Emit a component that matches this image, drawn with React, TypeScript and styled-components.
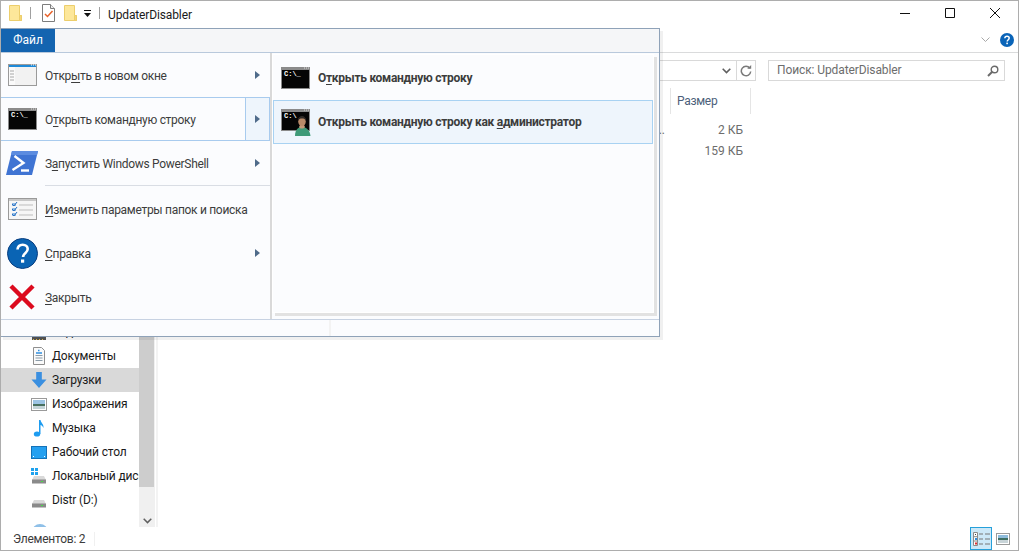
import React from "react";
import styled, { createGlobalStyle } from "styled-components";

const Global = createGlobalStyle`
  html, body { margin: 0; padding: 0; background: #fff; }
  body { font-family: "Roboto", "Noto Sans", "Liberation Sans", sans-serif; font-size: 12px; color: #1a1a1a; overflow: hidden; }
  * { box-sizing: border-box; }
`;

const Win = styled.div`
  position: relative;
  width: 1019px;
  height: 551px;
  border: 1px solid #adadad;
  background: #fff;
  display: flex;
  flex-direction: column;
  overflow: hidden;
`;
const TitleBar = styled.div`
  height: 28px;
  flex: none;
  display: flex;
  align-items: center;
  padding: 0 1px 4px 8px;
`;
const QuickIcon = styled.span<{ $ml?: number }>`
  display: flex;
  margin-left: ${(p) => p.$ml ?? 0}px;
`;
const QuickSep = styled.span<{ $ml: number }>`
  width: 1px;
  height: 12px;
  background: #a0a0a0;
  margin-left: ${(p) => p.$ml}px;
`;
const Title = styled.span`
  margin: 3px 0 0 8px;
  color: #1a1a1a;
  letter-spacing: -0.13px;
  flex: 1;
`;
const WinBtn = styled.span`
  width: 45px;
  height: 20px;
  display: flex;
  align-items: center;
  justify-content: center;
`;
const RibbonRow = styled.div`
  height: 24px;
  flex: none;
  border-bottom: 1px solid #dadbdc;
  display: flex;
  align-items: center;
  justify-content: flex-end;
  gap: 10px;
  padding-right: 4px;
  padding-bottom: 2px;
`;
const AddressRow = styled.div`
  height: 34px;
  flex: none;
  display: flex;
  align-items: flex-start;
  padding: 7px 13px 0 159px;
`;
const AddressBox = styled.div`
  width: 596px;
  height: 21px;
  border: 1px solid #d9d9d9;
  display: flex;
  align-items: center;
  justify-content: flex-end;
`;
const Refresh = styled.span`
  width: 19px;
  height: 19px;
  margin-left: 5px;
  border-left: 1px solid #d9d9d9;
  display: flex;
  align-items: center;
  justify-content: center;
`;
const SearchBox = styled.div`
  width: 237px;
  height: 21px;
  margin-left: 12px;
  border: 1px solid #d9d9d9;
  display: flex;
  align-items: center;
  justify-content: space-between;
  padding: 0 5px 2px 8px;
  color: #6d6d6d;
  letter-spacing: -0.1px;
  svg { margin-top: 2px; }
`;
const Main = styled.div`
  flex: 1;
  min-height: 0;
  display: flex;
`;
const Nav = styled.div`
  width: 138px;
  flex: none;
  display: flex;
  flex-direction: column;
  justify-content: flex-end;
  overflow: hidden;
`;
const NavRow = styled.div<{ $active?: boolean }>`
  height: 24px;
  flex: none;
  display: flex;
  align-items: center;
  gap: 5px;
  padding-left: 30px;
  white-space: nowrap;
  letter-spacing: -0.15px;
  background: ${(p) => (p.$active ? "#d9d9d9" : "transparent")};
  svg { flex: none; }
`;
const NavPeek = styled.div`
  height: 15px;
  flex: none;
  padding: 12px 0 0 31px;
  overflow: hidden;
`;
const Scroll = styled.div`
  width: 16px;
  flex: none;
  display: flex;
  flex-direction: column;
  background: #f0f0f0;
`;
const Thumb = styled.div`
  flex: 1;
  width: 15px;
  background: #cdcdcd;
`;
const ScrollEnd = styled.div`
  height: 40px;
  flex: none;
  display: flex;
  align-items: flex-end;
  justify-content: center;
  padding-bottom: 3px;
`;
const List = styled.div`
  flex: 1;
  margin-left: 1px;
  border-left: 2px solid #f3f3f3;
`;
const HeaderRow = styled.div`
  height: 26px;
  margin-top: 1px;
  display: flex;
  padding-left: 512px;
`;
const HeaderCell = styled.div`
  width: 81px;
  border-left: 1px solid #e5e5e5;
  border-right: 1px solid #e5e5e5;
  padding-left: 6px;
  line-height: 26px;
  color: #4c607a;
  letter-spacing: -0.3px;
`;
const FileRows = styled.div`
  padding-top: 5px;
`;
const FileRow = styled.div`
  height: 21px;
  display: flex;
  align-items: center;
  padding-left: 430px;
  color: #6d6d6d;
`;
const TypeCell = styled.div`
  width: 77px;
  overflow: hidden;
  white-space: nowrap;
  text-align: right;
`;
const SizeCell = styled.div`
  width: 78px;
  text-align: right;
`;
const Status = styled.div`
  height: 23px;
  flex: none;
  display: flex;
  align-items: center;
  padding-left: 12px;
  color: #3c3c3c;
  letter-spacing: -0.25px;
`;
const StatusText = styled.span`
  width: 82px;
  height: 14px;
  line-height: 14px;
  border-right: 1px solid #f0f0f0;
  flex: none;
`;
const ViewBtns = styled.div`
  margin-left: auto;
  display: flex;
  align-items: center;
  gap: 4px;
  padding-right: 8px;
  height: 100%;
`;
const ViewActive = styled.span`
  width: 22px;
  height: 23px;
  background: #cce8f8;
  border: 1px solid #26a0da;
  display: flex;
  align-items: center;
  justify-content: center;
`;

/* file menu overlay */
const Menu = styled.div`
  position: absolute;
  left: -1px;
  top: 27px;
  width: 660px;
  height: 309px;
  border: 1px solid #8fa2b8;
  background: #fbfcfe;
  box-shadow: 3px 3px 0 rgba(0, 0, 0, 0.06);
  display: flex;
  flex-direction: column;
`;
const MenuHead = styled.div`
  height: 24px;
  flex: none;
  background: #f5f6f8;
  border-bottom: 1px solid #b9c9dc;
  display: flex;
`;
const FileTab = styled.div`
  width: 54px;
  height: 23px;
  background: #1464b0;
  color: #fff;
  text-align: center;
  line-height: 23px;
`;
const MenuBody = styled.div`
  height: 267px;
  flex: none;
  display: flex;
  border-bottom: 1px solid #c7d2e2;
`;
const MenuCol = styled.div`
  width: 269px;
  flex: none;
  display: flex;
  flex-direction: column;
`;
const Splitter = styled.div`
  width: 2px;
  flex: none;
  background: #d9d9d9;
`;
const MenuRow = styled.div<{ $open?: boolean }>`
  height: 44px;
  flex: none;
  display: flex;
  align-items: center;
  color: #3c3c3c;
  letter-spacing: -0.3px;
  border-top: 1px solid ${(p) => (p.$open ? "#a8cbee" : "transparent")};
  border-bottom: 1px solid ${(p) => (p.$open ? "#a8cbee" : "transparent")};
  border-right: 1px solid ${(p) => (p.$open ? "#a8cbee" : "transparent")};
`;
const RowIcon = styled.span`
  width: 44px;
  flex: none;
  padding-left: 7px;
  display: flex;
  align-items: center;
`;
const RowLabel = styled.span`
  flex: 1;
  margin-top: 2px;
  white-space: nowrap;
`;
const ArrowCell = styled.span<{ $open?: boolean }>`
  width: 24px;
  align-self: stretch;
  flex: none;
  display: flex;
  align-items: center;
  justify-content: center;
  border-left: 1px solid ${(p) => (p.$open ? "#a8cbee" : "transparent")};
  background: ${(p) => (p.$open ? "#eef5fc" : "transparent")};
`;
const MenuSep = styled.div`
  height: 2px;
  flex: none;
  margin-left: 44px;
  border-top: 1px solid #d9dde4;
`;
const SubPanel = styled.div`
  width: 382px;
  height: 259px;
  margin-top: 1px;
  padding-top: 1px;
  background: #fbfcfe;
  border: 1px solid #fff;
  box-shadow: 3px 3px 0 #e2e2e2;
`;
const SubItem = styled.div<{ $hot?: boolean }>`
  height: 44px;
  display: flex;
  align-items: center;
  padding-left: 7px;
  gap: 8px;
  font-weight: 700;
  color: #3c3c3c;
  letter-spacing: -0.28px;
  background: ${(p) => (p.$hot ? "#eef5fc" : "transparent")};
  border: 1px solid ${(p) => (p.$hot ? "#a8d2f2" : "transparent")};
`;
const SubAdminLabel = styled.span`
  margin-left: -1px;
`;
const MenuFoot = styled.div`
  flex: 1;
  padding-left: 328px;
`;
const FootLine = styled.div`
  width: 2px;
  height: 100%;
  background: #f3f3f3;
`;
const Key = styled.u`
  text-underline-offset: 2px;
  text-decoration-thickness: 1px;
`;
const IconPull = styled.span<{ $ml: number }>`
  display: flex;
  margin-left: ${(p) => p.$ml}px;
`;

/* icons */
const Folder = () => (
  <svg width="13" height="16" viewBox="0 0 13 16">
    <path d="M.5.5h10v10h2v5H.5z" fill="#fde79a" stroke="#ecce6c" />
    <path d="M10.500 10.500v5h2v-5z" fill="#f4d67a" stroke="#ecce6c" />
  </svg>
);
const Props = () => (
  <svg width="13" height="18" viewBox="0 0 13 18">
    <path d="M.5.5h8l4 4v13H.5z" fill="#fff" stroke="#7d7d7d" />
    <path d="M8.500.5v4h4" fill="#eee" stroke="#7d7d7d" />
    <path d="M3 10l2.500 2.500L10.500 7" fill="none" stroke="#e8622a" strokeWidth="1.500" />
  </svg>
);
const QatArrow = () => (
  <svg width="7" height="7" viewBox="0 0 7 7">
    <path d="M0 0h7v1H0zM0 3h7L3.500 7z" fill="#111" />
  </svg>
);
const Min = () => (
  <svg width="10" height="10" viewBox="0 0 10 10"><path d="M0 5.500h10" stroke="#111" /></svg>
);
const Max = () => (
  <svg width="10" height="10" viewBox="0 0 10 10"><path d="M.5.5h9v9h-9z" fill="none" stroke="#111" /></svg>
);
const Close = () => (
  <svg width="10" height="10" viewBox="0 0 10 10"><path d="M0 0l10 10M10 0L0 10" stroke="#111" /></svg>
);
const ChevronThin = () => (
  <svg width="9" height="6" viewBox="0 0 9 6"><path d="M.5.5l4 4 4-4" fill="none" stroke="#a8a8a8" /></svg>
);
const HelpSmall = () => (
  <svg width="14" height="14" viewBox="0 0 14 14">
    <circle cx="7" cy="7" r="7" fill="#0a64b8" />
    <path d="M4.800 5.200C4.900 3.900 5.800 3.200 7 3.200c1.300 0 2.200.8 2.200 1.900 0 1.700-2 1.700-2 3.500" fill="none" stroke="#fff" strokeWidth="1.500" />
    <rect x="6.300" y="9.600" width="1.600" height="1.600" fill="#fff" />
  </svg>
);
const DropChevron = () => (
  <svg width="9" height="6" viewBox="0 0 9 6"><path d="M.7.8l3.800 3.800L8.300.8" fill="none" stroke="#5f5f5f" strokeWidth="1.600" /></svg>
);
const RefreshIcon = () => (
  <svg width="12" height="12" viewBox="0 0 12 12">
    <path d="M9.800 3.200A4.700 4.700 0 1 0 10.700 6.500" fill="none" stroke="#7a7a7a" strokeWidth="1.500" />
    <path d="M7.200 3.800h4V0z" fill="#7a7a7a" />
  </svg>
);
const Magnifier = () => (
  <svg width="12" height="12" viewBox="0 0 12 12">
    <circle cx="7.500" cy="4.500" r="3.300" fill="none" stroke="#6a6a6a" strokeWidth="1.400" />
    <path d="M5 7L1 11" stroke="#6a6a6a" strokeWidth="2" />
  </svg>
);
const Arrow = () => (
  <svg width="5" height="8" viewBox="0 0 5 8"><path d="M0 0l5 4-5 4z" fill="#4f6b8a" /></svg>
);
const NewWindow = () => (
  <svg width="29" height="22" viewBox="0 0 29 22">
    <rect x=".5" y=".5" width="28" height="21" fill="#f2f2f2" stroke="#9a9a9a" />
    <rect x="1" y="1" width="27" height="2" fill="#1f8ad8" />
    <rect x="1" y="3" width="6" height="18" fill="#fafafa" />
    <path d="M2 7h4M2 10h4M2 13h4M2 16h4" stroke="#a8a8a8" />
    <path d="M23 1h1M25 1h1M27 1h1" stroke="#fff" />
  </svg>
);
const Prompt = styled.text`
  font-family: "Liberation Mono", monospace;
  font-size: 7px;
  letter-spacing: 0;
  font-weight: 700;
  fill: #fff;
`;
const Cmd = () => (
  <svg width="29" height="22" viewBox="0 0 29 22">
    <rect x=".5" y=".5" width="28" height="21" fill="#050505" stroke="#8a8a8a" />
    <rect x="1" y="1" width="27" height="2" fill="#8c8c8c" />
    <path d="M23 1h1M25 1h1M27 1h1" stroke="#ddd" />
    <Prompt x="3" y="9">C:\_</Prompt>
  </svg>
);
const CmdAdmin = () => (
  <svg width="30" height="27" viewBox="0 0 30 27">
    <rect x=".5" y=".5" width="28" height="21" fill="#050505" stroke="#8a8a8a" />
    <rect x="1" y="1" width="27" height="2" fill="#8c8c8c" />
    <path d="M23 1h1M25 1h1M27 1h1" stroke="#ddd" />
    <Prompt x="3" y="9">C:\</Prompt>
    <path d="M14 27c0-6 3-9 7-9s8 3 8.500 9z" fill="#3f9a78" />
    <path d="M18 18c.5 2 5 2 6 0l-1-2h-4z" fill="#c49a78" />
    <ellipse cx="21" cy="12.500" rx="3.800" ry="4.500" fill="#b98a68" />
    <path d="M17 12c0-3.500 2-5 4-5s4 1.500 4 5c-1-2-2-2.500-4-2.500s-3 .5-4 2.500z" fill="#2f2a26" />
  </svg>
);
const PowerShell = () => (
  <svg width="32" height="24" viewBox="0 0 32 24">
    <path d="M6 0h26l-6 24H0z" fill="#3f74d3" />
    <path d="M6 0h26l-1 4H5z" fill="#5c8ce0" />
    <path d="M8.500 5l9 7-11 7" fill="none" stroke="#fff" strokeWidth="2.400" />
    <path d="M15 19.500h8" stroke="#fff" strokeWidth="2.400" />
  </svg>
);
const Settings = () => (
  <svg width="29" height="22" viewBox="0 0 29 22">
    <rect x=".5" y=".5" width="28" height="21" fill="#f6f6f6" stroke="#9a9a9a" />
    <rect x="1" y="1" width="27" height="2" fill="#c8c8c8" />
    <rect x="4" y="5" width="4" height="3" fill="#8fbbe6" />
    <rect x="4" y="10" width="4" height="3" fill="#8fbbe6" />
    <rect x="4" y="15" width="4" height="3" fill="#8fbbe6" />
    <path d="M4 6l2 2 3-4M4 11l2 2 3-4M4 16l2 2 3-4" fill="none" stroke="#2a6fc0" />
    <path d="M11 7h14M11 12h14M11 17h14" stroke="#bdbdbd" />
  </svg>
);
const Help = () => (
  <svg width="31" height="31" viewBox="0 0 31 31">
    <circle cx="15.500" cy="15.500" r="15" fill="#0a64b4" stroke="#0a3f80" />
    <path d="M10.500 11.500c.2-3 2.400-4.800 5.200-4.800 3 0 5 1.900 5 4.400 0 4-4.600 3.700-4.600 8" fill="none" stroke="#fff" strokeWidth="2.600" />
    <rect x="14" y="21.500" width="3.200" height="3.200" fill="#fff" />
  </svg>
);
const RedX = () => (
  <svg width="26" height="26" viewBox="0 0 26 26">
    <path d="M2 2l22 22M24 2L2 24" stroke="#dc0a1e" strokeWidth="4.500" />
  </svg>
);
const FilmIcon = () => (
  <svg width="16" height="16" viewBox="0 0 16 16">
    <rect x="1" y="4" width="14" height="12" fill="#555" />
    <path d="M2 15.500h1M5 15.500h1M8 15.500h1M11 15.500h1" stroke="#e8c04a" />
  </svg>
);
const DocIcon = () => (
  <svg width="16" height="18" viewBox="0 0 16 18">
    <path d="M2.500.5h8l3 3v14h-11z" fill="#fafafa" stroke="#8f8f8f" />
    <path d="M7 3.500h1.500M5 6h6" stroke="#2f8fe0" strokeWidth="1.400" />
    <path d="M4.500 8.500h7M4.500 11h7M4.500 13.500h7" stroke="#8a9ba8" />
  </svg>
);
const DownIcon = () => (
  <svg width="16" height="16" viewBox="0 0 17 17">
    <path d="M5.500 0h6v8h5L8.500 17 .5 8h5z" fill="#3a8fe0" />
  </svg>
);
const ImgIcon = () => (
  <svg width="16" height="13" viewBox="0 0 16 13">
    <rect x=".5" y=".5" width="15" height="12" fill="#fff" stroke="#9a9a9a" />
    <rect x="2" y="2" width="12" height="4" fill="#9cc4e4" />
    <rect x="2" y="6" width="12" height="2" fill="#48705f" />
    <rect x="2" y="8" width="12" height="3" fill="#c4d4d8" />
  </svg>
);
const NoteIcon = () => (
  <svg width="16" height="17" viewBox="0 0 16 17">
    <ellipse cx="6" cy="14" rx="3.200" ry="2.600" fill="#1e9cf0" />
    <path d="M8 14V0h1.500c.5 3 3.500 4 3 8-.8-2-2.200-3-3-3v9z" fill="#1e9cf0" />
  </svg>
);
const DesktopIcon = () => (
  <svg width="16" height="13" viewBox="0 0 16 13">
    <rect x=".5" y=".5" width="15" height="12" fill="#25a0f0" stroke="#1472b8" />
    <path d="M2 10.500h1M13 10.500h1" stroke="#fff" />
  </svg>
);
const DriveShape = () => (
  <>
    <path d="M3 8h10l2 4H1z" fill="#d9d9d9" />
    <rect x="1" y="11.500" width="14" height="4" fill="#8a8a8a" />
    <rect x="10" y="13" width="2" height="1" fill="#46e046" />
  </>
);
const WinDrive = () => (
  <svg width="16" height="16" viewBox="0 0 16 16">
    <path d="M0 0h3v3H0zM4 0h3v3H4zM0 4h3v3H0zM4 4h3v3H4z" fill="#1ea2ee" />
    <DriveShape />
  </svg>
);
const Drive = () => (
  <svg width="16" height="16" viewBox="0 0 16 16"><DriveShape /></svg>
);
const Globe = () => (
  <svg width="16" height="16" viewBox="0 0 16 16"><circle cx="8" cy="8" r="8" fill="#8fc0e8" /></svg>
);
const DetailsView = () => (
  <svg width="17" height="14" viewBox="0 0 17 14">
    <path d="M.5.500h4v13h-4zM.5 4.700h4M.5 9h4" fill="#fff" stroke="#8a8a8a" />
    <rect x="2" y="2" width="1" height="1" fill="#444" />
    <rect x="2" y="6" width="2" height="2" fill="#2f8fe0" />
    <rect x="2" y="10.500" width="2" height="2" fill="#e03030" />
    <path d="M6 2h4M12 2h5M6 7h4M12 7h5M6 12h4M12 12h5" stroke="#777" />
  </svg>
);
const LargeView = () => (
  <svg width="14" height="12" viewBox="0 0 14 12">
    <rect x=".5" y=".5" width="13" height="11" fill="#fff" stroke="#9a9a9a" />
    <rect x="2" y="2" width="10" height="3" fill="#8fbcdc" />
    <rect x="2" y="5" width="10" height="2" fill="#3f6f62" />
    <rect x="2" y="7" width="10" height="3" fill="#c8d4d8" />
  </svg>
);
const ScrollDown = () => (
  <svg width="9" height="6" viewBox="0 0 9 6"><path d="M.7.8l3.800 3.800L8.300.8" fill="none" stroke="#606060" strokeWidth="1.500" /></svg>
);

export default function App() {
  return (
    <>
      <Global />
      <Win>
        <TitleBar>
          <QuickIcon><Folder /></QuickIcon>
          <QuickSep $ml={8} />
          <QuickIcon $ml={11}><Props /></QuickIcon>
          <QuickIcon $ml={9}><Folder /></QuickIcon>
          <QuickIcon $ml={7}><QatArrow /></QuickIcon>
          <QuickSep $ml={8} />
          <Title>UpdaterDisabler</Title>
          <WinBtn><Min /></WinBtn>
          <WinBtn><Max /></WinBtn>
          <WinBtn><Close /></WinBtn>
        </TitleBar>
        <RibbonRow>
          <ChevronThin />
          <HelpSmall />
        </RibbonRow>
        <AddressRow>
          <AddressBox>
            <DropChevron />
            <Refresh><RefreshIcon /></Refresh>
          </AddressBox>
          <SearchBox>
            <span>Поиск: UpdaterDisabler</span>
            <Magnifier />
          </SearchBox>
        </AddressRow>
        <Main>
          <Nav>
            <NavRow><FilmIcon />Видео</NavRow>
            <NavRow><DocIcon />Документы</NavRow>
            <NavRow $active><DownIcon />Загрузки</NavRow>
            <NavRow><ImgIcon />Изображения</NavRow>
            <NavRow><NoteIcon />Музыка</NavRow>
            <NavRow><DesktopIcon />Рабочий стол</NavRow>
            <NavRow><WinDrive />Локальный диск (C:)</NavRow>
            <NavRow><Drive />Distr (D:)</NavRow>
            <NavPeek><Globe /></NavPeek>
          </Nav>
          <Scroll>
            <Thumb />
            <ScrollEnd><ScrollDown /></ScrollEnd>
          </Scroll>
          <List>
            <HeaderRow><HeaderCell>Размер</HeaderCell></HeaderRow>
            <FileRows>
              <FileRow><TypeCell>файл W...</TypeCell><SizeCell>2 КБ</SizeCell></FileRow>
              <FileRow><TypeCell /><SizeCell>159 КБ</SizeCell></FileRow>
            </FileRows>
          </List>
        </Main>
        <Status>
          <StatusText>Элементов: 2</StatusText>
          <ViewBtns>
            <ViewActive><DetailsView /></ViewActive>
            <LargeView />
          </ViewBtns>
        </Status>

        <Menu>
          <MenuHead><FileTab>Файл</FileTab></MenuHead>
          <MenuBody>
            <MenuCol>
              <MenuRow>
                <RowIcon><NewWindow /></RowIcon>
                <RowLabel>Откр<Key>ы</Key>ть в новом окне</RowLabel>
                <ArrowCell><Arrow /></ArrowCell>
              </MenuRow>
              <MenuRow $open>
                <RowIcon><Cmd /></RowIcon>
                <RowLabel>О<Key>т</Key>крыть командную строку</RowLabel>
                <ArrowCell $open><Arrow /></ArrowCell>
              </MenuRow>
              <MenuRow>
                <RowIcon><IconPull $ml={-2}><PowerShell /></IconPull></RowIcon>
                <RowLabel>З<Key>а</Key>пустить Windows PowerShell</RowLabel>
                <ArrowCell><Arrow /></ArrowCell>
              </MenuRow>
              <MenuSep />
              <MenuRow>
                <RowIcon><Settings /></RowIcon>
                <RowLabel><Key>И</Key>зменить параметры папок и поиска</RowLabel>
              </MenuRow>
              <MenuRow>
                <RowIcon><IconPull $ml={-1}><Help /></IconPull></RowIcon>
                <RowLabel><Key>С</Key>правка</RowLabel>
                <ArrowCell><Arrow /></ArrowCell>
              </MenuRow>
              <MenuRow>
                <RowIcon><IconPull $ml={1}><RedX /></IconPull></RowIcon>
                <RowLabel><Key>З</Key>акрыть</RowLabel>
              </MenuRow>
            </MenuCol>
            <Splitter />
            <SubPanel>
              <SubItem>
                <Cmd />
                <span>О<Key>т</Key>крыть командную строку</span>
              </SubItem>
              <SubItem $hot>
                <CmdAdmin />
                <SubAdminLabel>Открыть командную строку как <Key>а</Key>дминистратор</SubAdminLabel>
              </SubItem>
            </SubPanel>
          </MenuBody>
          <MenuFoot><FootLine /></MenuFoot>
        </Menu>
      </Win>
    </>
  );
}
